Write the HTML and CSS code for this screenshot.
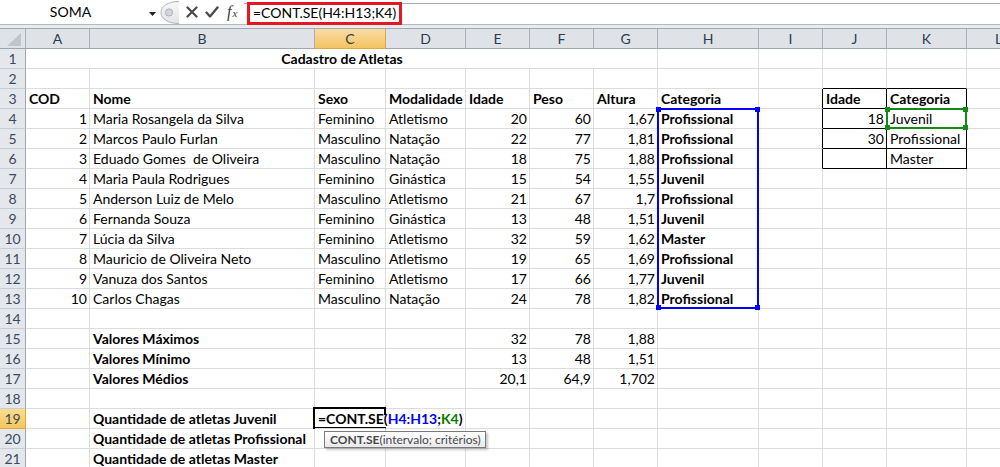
FILE: index.html
```html
<!DOCTYPE html>
<html lang="pt-BR">
<head>
<meta charset="utf-8">
<title>Cadastro de Atletas</title>
<link rel="stylesheet" href="styles.css">
</head>
<body>
<div class="app">
  <div class="fbar">
    <div class="namebox">
      <span class="nb-text">SOMA</span>
      <svg class="nb-arrow" width="7" height="4" viewBox="0 0 7 4"><path d="M0 0h7L3.5 4z" fill="#222"/></svg>
    </div>
    <div class="fbtns">
      <svg class="grip" width="20" height="25" viewBox="0 0 20 25">
        <defs><linearGradient id="gg" x1="0" y1="0" x2="0" y2="1"><stop offset="0" stop-color="#f7f8f9"/><stop offset="1" stop-color="#e2e5e9"/></linearGradient></defs>
        <path d="M20 1.5C8.5 1.5 2 6.5 2 12.5S8.5 23.5 20 23.5" fill="url(#gg)" stroke="#aeb3ba"/>
        <circle cx="10" cy="12.5" r="3.6" fill="#d3d7dc" stroke="#a9afb6"/>
      </svg>
      <svg class="btn-x" width="12" height="12" viewBox="0 0 12 12"><path d="M1.5 1.5l9 9M10.5 1.5l-9 9" stroke="#4a4a4a" stroke-width="2.2" stroke-linecap="round"/></svg>
      <svg class="btn-ok" width="14" height="12" viewBox="0 0 14 12"><path d="M1.5 6.5l3.5 4 7.5-9" fill="none" stroke="#4a4a4a" stroke-width="2.3" stroke-linecap="round" stroke-linejoin="round"/></svg>
      <span class="fx"><i>f</i><i class="fx-x">x</i></span>
    </div>
    <div class="finput">
      <span class="fformula">=CONT.SE(H4:H13;K4)</span>
    </div>
  </div>

  <div class="sheet">
    <div class="r">
      <div class="corner"><svg width="25" height="19" viewBox="0 0 25 19"><path d="M21 4V17H7z" fill="#c0c5cb"/></svg></div>
      <div class="ch">A</div><div class="ch">B</div><div class="ch sel">C</div><div class="ch">D</div><div class="ch">E</div><div class="ch">F</div><div class="ch">G</div><div class="ch">H</div><div class="ch">I</div><div class="ch">J</div><div class="ch">K</div><div class="ch">L</div>
    </div>
    <div class="r">
      <div class="rh">1</div>
      <div class="c b title">Cadastro de Atletas</div>
      <div class="c"></div><div class="c"></div><div class="c"></div><div class="c"></div><div class="c"></div>
    </div>
    <div class="r">
      <div class="rh">2</div>
      <div class="c"></div><div class="c"></div><div class="c"></div><div class="c"></div><div class="c"></div><div class="c"></div><div class="c"></div><div class="c"></div>
      <div class="c"></div><div class="c kb"></div><div class="c kb"></div><div class="c"></div>
    </div>
    <div class="r">
      <div class="rh">3</div>
      <div class="c b">COD</div><div class="c b">Nome</div><div class="c b">Sexo</div><div class="c b">Modalidade</div><div class="c b">Idade</div><div class="c b">Peso</div><div class="c b">Altura</div><div class="c b">Categoria</div>
      <div class="c kr"></div><div class="c b kr kb">Idade</div><div class="c b kr kb">Categoria</div><div class="c"></div>
    </div>
    <div class="r">
      <div class="rh">4</div>
      <div class="c n">1</div><div class="c">Maria Rosangela da Silva</div><div class="c">Feminino</div><div class="c">Atletismo</div><div class="c n">20</div><div class="c n">60</div><div class="c n">1,67</div><div class="c b">Profissional</div>
      <div class="c kr"></div><div class="c n kr kb">18</div><div class="c kr kb">Juvenil</div><div class="c"></div>
    </div>
    <div class="r">
      <div class="rh">5</div>
      <div class="c n">2</div><div class="c">Marcos Paulo Furlan</div><div class="c">Masculino</div><div class="c">Natação</div><div class="c n">22</div><div class="c n">77</div><div class="c n">1,81</div><div class="c b">Profissional</div>
      <div class="c kr"></div><div class="c n kr kb">30</div><div class="c kr kb">Profissional</div><div class="c"></div>
    </div>
    <div class="r">
      <div class="rh">6</div>
      <div class="c n">3</div><div class="c">Eduado Gomes&nbsp; de Oliveira</div><div class="c">Masculino</div><div class="c">Natação</div><div class="c n">18</div><div class="c n">75</div><div class="c n">1,88</div><div class="c b">Profissional</div>
      <div class="c kr"></div><div class="c n kr kb"></div><div class="c kr kb">Master</div><div class="c"></div>
    </div>
    <div class="r">
      <div class="rh">7</div>
      <div class="c n">4</div><div class="c">Maria Paula Rodrigues</div><div class="c">Feminino</div><div class="c">Ginástica</div><div class="c n">15</div><div class="c n">54</div><div class="c n">1,55</div><div class="c b">Juvenil</div>
      <div class="c"></div><div class="c"></div><div class="c"></div><div class="c"></div>
    </div>
    <div class="r">
      <div class="rh">8</div>
      <div class="c n">5</div><div class="c">Anderson Luiz de Melo</div><div class="c">Masculino</div><div class="c">Atletismo</div><div class="c n">21</div><div class="c n">67</div><div class="c n">1,7</div><div class="c b">Profissional</div>
      <div class="c"></div><div class="c"></div><div class="c"></div><div class="c"></div>
    </div>
    <div class="r">
      <div class="rh">9</div>
      <div class="c n">6</div><div class="c">Fernanda Souza</div><div class="c">Feminino</div><div class="c">Ginástica</div><div class="c n">13</div><div class="c n">48</div><div class="c n">1,51</div><div class="c b">Juvenil</div>
      <div class="c"></div><div class="c"></div><div class="c"></div><div class="c"></div>
    </div>
    <div class="r">
      <div class="rh">10</div>
      <div class="c n">7</div><div class="c">Lúcia da Silva</div><div class="c">Feminino</div><div class="c">Atletismo</div><div class="c n">32</div><div class="c n">59</div><div class="c n">1,62</div><div class="c b">Master</div>
      <div class="c"></div><div class="c"></div><div class="c"></div><div class="c"></div>
    </div>
    <div class="r">
      <div class="rh">11</div>
      <div class="c n">8</div><div class="c">Mauricio de Oliveira Neto</div><div class="c">Masculino</div><div class="c">Atletismo</div><div class="c n">19</div><div class="c n">65</div><div class="c n">1,69</div><div class="c b">Profissional</div>
      <div class="c"></div><div class="c"></div><div class="c"></div><div class="c"></div>
    </div>
    <div class="r">
      <div class="rh">12</div>
      <div class="c n">9</div><div class="c">Vanuza dos Santos</div><div class="c">Feminino</div><div class="c">Atletismo</div><div class="c n">17</div><div class="c n">66</div><div class="c n">1,77</div><div class="c b">Juvenil</div>
      <div class="c"></div><div class="c"></div><div class="c"></div><div class="c"></div>
    </div>
    <div class="r">
      <div class="rh">13</div>
      <div class="c n">10</div><div class="c">Carlos Chagas</div><div class="c">Masculino</div><div class="c">Natação</div><div class="c n">24</div><div class="c n">78</div><div class="c n">1,82</div><div class="c b">Profissional</div>
      <div class="c"></div><div class="c"></div><div class="c"></div><div class="c"></div>
    </div>
    <div class="r">
      <div class="rh">14</div>
      <div class="c"></div><div class="c"></div><div class="c"></div><div class="c"></div><div class="c"></div><div class="c"></div><div class="c"></div><div class="c"></div><div class="c"></div><div class="c"></div><div class="c"></div><div class="c"></div>
    </div>
    <div class="r">
      <div class="rh">15</div>
      <div class="c"></div><div class="c b">Valores Máximos</div><div class="c"></div><div class="c"></div><div class="c n">32</div><div class="c n">78</div><div class="c n">1,88</div><div class="c"></div><div class="c"></div><div class="c"></div><div class="c"></div><div class="c"></div>
    </div>
    <div class="r">
      <div class="rh">16</div>
      <div class="c"></div><div class="c b">Valores Mínimo</div><div class="c"></div><div class="c"></div><div class="c n">13</div><div class="c n">48</div><div class="c n">1,51</div><div class="c"></div><div class="c"></div><div class="c"></div><div class="c"></div><div class="c"></div>
    </div>
    <div class="r">
      <div class="rh">17</div>
      <div class="c"></div><div class="c b">Valores Médios</div><div class="c"></div><div class="c"></div><div class="c n">20,1</div><div class="c n">64,9</div><div class="c n">1,702</div><div class="c"></div><div class="c"></div><div class="c"></div><div class="c"></div><div class="c"></div>
    </div>
    <div class="r">
      <div class="rh">18</div>
      <div class="c"></div><div class="c"></div><div class="c"></div><div class="c"></div><div class="c"></div><div class="c"></div><div class="c"></div><div class="c"></div><div class="c"></div><div class="c"></div><div class="c"></div><div class="c"></div>
    </div>
    <div class="r">
      <div class="rh sel">19</div>
      <div class="c"></div><div class="c b">Quantidade de atletas Juvenil</div><div class="c b edit">=CONT.SE(<span class="ref-blue">H4:H13</span>;<span class="ref-green">K4</span>)</div><div class="c"></div><div class="c"></div><div class="c"></div><div class="c"></div><div class="c"></div><div class="c"></div><div class="c"></div><div class="c"></div><div class="c"></div>
    </div>
    <div class="r">
      <div class="rh">20</div>
      <div class="c"></div><div class="c b">Quantidade de atletas Profissional</div><div class="c"></div><div class="c"></div><div class="c"></div><div class="c"></div><div class="c"></div><div class="c"></div><div class="c"></div><div class="c"></div><div class="c"></div><div class="c"></div>
    </div>
    <div class="r">
      <div class="rh">21</div>
      <div class="c"></div><div class="c b">Quantidade de atletas Master</div><div class="c"></div><div class="c"></div><div class="c"></div><div class="c"></div><div class="c"></div><div class="c"></div><div class="c"></div><div class="c"></div><div class="c"></div><div class="c"></div>
    </div>

    <div class="range range-blue"><span class="hd tl"></span><span class="hd tr"></span><span class="hd bl"></span><span class="hd br"></span></div>
    <div class="range range-green"><span class="hd tl"></span><span class="hd tr"></span><span class="hd bl"></span><span class="hd br"></span></div>
    <div class="active"></div>
    <div class="tip"><b>CONT.SE</b>(intervalo; critérios)</div>
  </div>
</div>
</body>
</html>
```

FILE: styles.css
```css
* { box-sizing: border-box; }
html, body { margin: 0; padding: 0; }
body {
  width: 1000px;
  height: 467px;
  overflow: hidden;
  background: #fff;
  font-family: Lato, "Open Sans", sans-serif;
  font-size: 14px;
  color: #000;
}
.app { width: 1000px; height: 467px; overflow: hidden; }

/* ---------- formula bar ---------- */
.fbar {
  display: flex;
  height: 28px;
  background: linear-gradient(to bottom, #fff 0, #fff 24px, #b3b8be 24px, #b3b8be 25px, #e9ecef 25px, #e9ecef 28px);
}
.namebox {
  width: 158px;
  height: 24px;
  display: flex;
  align-items: center;
  background: #fff;
}
.nb-text { width: 141px; text-align: center; line-height: 24px; }
.nb-arrow { margin-left: 8px; margin-top: 3px; }
.fbtns {
  width: 86px;
  height: 24px;
  display: flex;
  align-items: center;
}
.grip { margin-left: 1px; }
.btn-x { margin-left: 7px; }
.btn-ok { margin-left: 7px; margin-top: -1px; }
.fx {
  margin-left: 8px;
  font-family: "Liberation Serif", serif;
  color: #3a3a3a;
  font-size: 16px;
  line-height: 24px;
}
.fx i { font-style: italic; }
.fx-x { font-size: 11px; margin-left: 1px; }
.finput {
  flex: 1;
  position: relative;
  margin-top: 3px;
  height: 21px;
  border-top: 1px solid #a9aeb4;
  background: #fff;
}
.fformula {
  position: absolute;
  left: 3px;
  top: -2px;
  height: 23px;
  padding: 0 3px;
  border: 3px solid #e8161e;
  line-height: 15px;
  white-space: nowrap;
}

/* ---------- sheet ---------- */
.sheet {
  position: relative;
  display: grid;
  grid-template-columns: 26px 64px 225px 71px 80px 64px 64px 64px 101px 64px 64px 80px 64px;
  grid-template-rows: repeat(22, 20px);
  width: 1031px;
  border-top: 1px solid #a3a9b0;
}
.r { display: contents; }
.corner {
  background: #dfe3e8;
  border-right: 1px solid #aab0b8;
  border-bottom: 1px solid #9ea5ad;
}
.corner svg { display: block; }
.ch {
  background: #dfe3e8;
  border-right: 1px solid #aab0b8;
  border-bottom: 1px solid #9ea5ad;
  text-align: center;
  line-height: 19px;
  color: #2b3c50;
}
.ch.sel {
  background: linear-gradient(#f9dba3, #f3c463);
  border-right-color: #e2a63e;
  border-bottom-color: #e2a63e;
}
.rh {
  background: #e4e8ec;
  border-right: 1px solid #9ea5ad;
  border-bottom: 1px solid #c8cdd3;
  text-align: center;
  line-height: 20px;
  color: #3b4a5b;
}
.rh.sel {
  background: linear-gradient(#fbdc8f, #f5c65c);
  border-bottom-color: #e2a63e;
  border-right-color: #e2a63e;
}
.c {
  border-right: 1px solid #dadcdd;
  border-bottom: 1px solid #dadcdd;
  padding: 0 2px 0 3px;
  line-height: 19px;
  white-space: nowrap;
  overflow: visible;
}
.n { text-align: right; padding-right: 2px; }
.b { font-weight: 700; }
.title { grid-column: span 7; text-align: center; }
.kr { border-right-color: #000; }
.kb { border-bottom-color: #000; }
.edit { border-right-color: transparent; position: relative; z-index: 3; }
.ref-blue { color: #0000ff; }
.ref-green { color: #008000; }

/* ---------- overlays ---------- */
.range {
  position: absolute;
  top: -1px;
  left: -1px;
  right: 0;
  bottom: 0;
  border: 2px solid;
  z-index: 2;
}
.range-blue { grid-row: 5 / 15; grid-column: 9 / 10; border-color: #0000ff; }
.range-green { grid-row: 5 / 6; grid-column: 12 / 13; border-color: #138c13; }
.hd { position: absolute; width: 5px; height: 5px; }
.range-blue .hd { background: #0000ff; }
.range-green .hd { background: #138c13; }
.hd.tl { left: -3px; top: -3px; }
.hd.tr { right: -3px; top: -3px; }
.hd.bl { left: -3px; bottom: -3px; }
.hd.br { right: -3px; bottom: -3px; }

.active {
  position: absolute;
  grid-row: 20 / 21;
  grid-column: 4 / 5;
  top: -2px;
  left: -2px;
  right: 0;
  bottom: 0;
  border-top: 2px solid #000;
  border-left: 2px solid #000;
  border-bottom: 2px solid #000;
  z-index: 2;
}
.active::after {
  content: "";
  position: absolute;
  right: 0;
  top: -2px;
  width: 2px;
  height: 8px;
  background: #000;
}
.tip {
  position: absolute;
  grid-row: 21 / 22;
  grid-column: 4 / 5;
  top: 2px;
  left: 9px;
  width: 162px;
  height: 17px;
  padding-left: 5px;
  border: 1px solid #7a7a7a;
  background: linear-gradient(#ffffff, #e9e9ec);
  box-shadow: 2px 2px 2px rgba(0, 0, 0, 0.22);
  font-size: 12px;
  line-height: 15px;
  color: #474747;
  white-space: nowrap;
  z-index: 4;
}
.tip b { font-weight: 700; }
```
